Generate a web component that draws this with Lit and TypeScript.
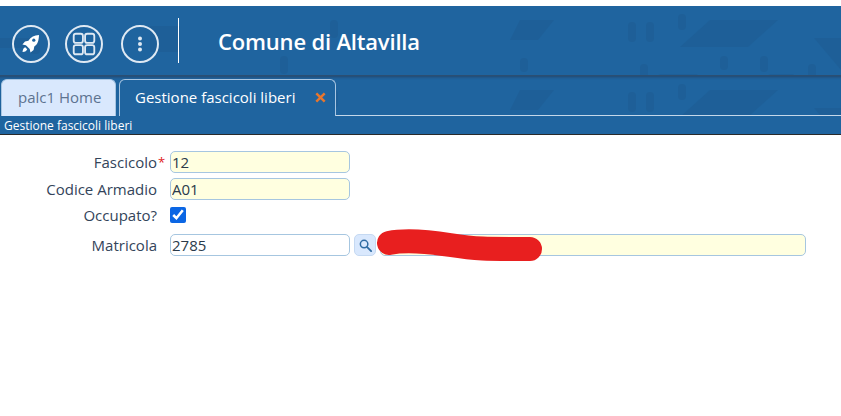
import { LitElement, css, html, svg } from "lit";
import { customElement } from "lit/decorators.js";

// faint block pattern behind the header, repeated on the tab strip
const patternShapes = svg`
    <path d="M710 14h68l-30 27h-68z" />
    <path d="M814 32h27v32z" />
    <path d="M660 68h38l-10 7h-36z" />
    <path d="M770 68h24l-6 7h-26z" />
    <path d="M0 32h36l-8 10h-28z" />
    <path d="M150 20h30v26h-30z" />
    <path d="M520 14h34l-16 20h-28z" />
    <rect x="678" y="8" width="8" height="16" rx="4" />
    <rect x="628" y="16" width="8" height="20" rx="4" />
    <rect x="646" y="16" width="8" height="20" rx="4" />
    <rect x="720" y="50" width="8" height="14" rx="4" />
    <rect x="760" y="50" width="8" height="16" rx="4" />
    <rect x="808" y="58" width="8" height="16" rx="4" />
    <rect x="640" y="58" width="8" height="16" rx="4" />
    <rect x="330" y="14" width="8" height="18" rx="4" />
    <rect x="280" y="50" width="8" height="18" rx="4" />
    <rect x="30" y="30" width="10" height="18" rx="4" />
    <rect x="520" y="52" width="8" height="14" rx="4" />
`;

@customElement("app-root")
export class AppRoot extends LitElement {
    renderHeader() {
        return html`
            <header class="header">
                <svg class="pattern" viewBox="0 0 841 110" preserveAspectRatio="none">
                    ${patternShapes}
                </svg>
                <button class="round">
                    <svg viewBox="0 0 24 24" width="24" height="24">
                        <path
                            fill="#fff"
                            d="M20 3c-4.800.2-8.200 2-10.600 5.700L6 9.400 3.400 12.500l3.500.8 3.800 3.800.8 3.500 3.100-2.600.7-3.400C19 12.200 19.800 8 20 3z"
                        />
                        <circle cx="14.800" cy="8.200" r="1.600" fill="#1f649f" />
                        <path fill="#fff" d="M6.300 15.300c-1.600.5-2.500 2-2.800 4.700 2.700-.3 4.200-1.200 4.700-2.800z" />
                    </svg>
                </button>
                <button class="round">
                    <svg viewBox="0 0 24 24" width="26" height="26" fill="none" stroke="#dfe9f3" stroke-width="1.700">
                        <rect x="2.500" y="2.500" width="8.500" height="8.500" rx="2" />
                        <rect x="13" y="2.500" width="8.500" height="8.500" rx="2" />
                        <rect x="2.500" y="13" width="8.500" height="8.500" rx="2" />
                        <rect x="13" y="13" width="8.500" height="8.500" rx="2" />
                    </svg>
                </button>
                <button class="round">
                    <svg viewBox="0 0 24 24" width="24" height="24" fill="#dfe9f3">
                        <circle cx="12" cy="6.500" r="2" />
                        <circle cx="12" cy="12" r="2" />
                        <circle cx="12" cy="17.500" r="2" />
                    </svg>
                </button>
                <div class="divider"></div>
                <h1>Comune di Altavilla</h1>
            </header>
        `;
    }

    renderTabs() {
        return html`
            <nav class="tabs">
                <svg class="pattern" viewBox="0 0 841 110" preserveAspectRatio="none">
                    ${patternShapes}
                </svg>
                <div class="tab home">palc1 Home</div>
                <div class="tab active">
                    Gestione fascicoli liberi
                    <svg class="close" viewBox="0 0 10 10" width="11" height="11">
                        <path d="M1.200 1.200l7.600 7.600M8.800 1.200L1.200 8.800" stroke="#e8762d" stroke-width="2.200" />
                    </svg>
                </div>
                <div class="tab-rest"></div>
            </nav>
            <div class="title-bar">Gestione fascicoli liberi</div>
        `;
    }

    renderForm() {
        return html`
            <form class="form">
                <label>Fascicolo<span class="req">*</span></label>
                <input class="field short" .value=${"12"} />

                <label>Codice Armadio</label>
                <input class="field short" .value=${"A01"} />

                <label class="check-row">Occupato?</label>
                <div class="check-cell check-row">
                    <input type="checkbox" .checked=${true} />
                </div>

                <label>Matricola</label>
                <div class="lookup">
                    <input class="field short white" .value=${"2785"} />
                    <button type="button" class="search">
                        <svg viewBox="0 0 16 16" width="15" height="15" fill="none">
                            <circle cx="6.500" cy="6.500" r="4" stroke="#2f6ca3" stroke-width="1.600" />
                            <path d="M9.800 9.800l4.200 4.200" stroke="#2f6ca3" stroke-width="2" stroke-linecap="round" />
                        </svg>
                    </button>
                    <input class="field long" />
                    <svg class="scribble" viewBox="0 0 171 36" width="171" height="36">
                        <path
                            d="M15 16C30 13 50 14 76 18S110 22 156 22"
                            fill="none"
                            stroke="#e81f1f"
                            stroke-width="24"
                            stroke-linecap="round"
                        />
                    </svg>
                </div>
            </form>
        `;
    }

    render() {
        return html`${this.renderHeader()}${this.renderTabs()}${this.renderForm()}`;
    }

    static styles = css`
        :host {
            display: block;
            width: 841px;
            height: 416px;
            background: #fff;
            padding-top: 6px;
            box-sizing: border-box;
            font-family: "Open Sans", sans-serif;
            color: #2b3a4a;
            overflow: hidden;
        }

        .pattern {
            position: absolute;
            left: 0;
            top: 0;
            width: 100%;
            height: 110px;
            fill: #1b4f7e;
            opacity: 0.2;
            pointer-events: none;
        }

        .header {
            position: relative;
            height: 69px;
            box-sizing: border-box;
            display: flex;
            align-items: center;
            gap: 18px;
            padding: 0 0 0 12px;
            background: #1f649f;
            overflow: hidden;
        }

        .round {
            position: relative;
            width: 38px;
            height: 38px;
            margin-top: 6px;
            padding: 0;
            display: flex;
            align-items: center;
            justify-content: center;
            border: 2px solid #dfe9f3;
            border-radius: 50%;
            background: transparent;
        }

        .round:nth-of-type(2) {
            margin-left: -3px;
        }

        .divider {
            position: relative;
            width: 1px;
            height: 45px;
            margin-left: 1px;
            background: #fff;
        }

        h1 {
            position: relative;
            margin: 0 0 0 21px;
            font-size: 22px;
            font-weight: 600;
            letter-spacing: -0.18px;
            color: #fff;
        }

        .tabs {
            position: relative;
            height: 41px;
            box-sizing: border-box;
            display: flex;
            align-items: flex-end;
            padding: 4px 0 0 1px;
            background: #1f649f;
            border-top: 1px solid #2b4f73;
            box-shadow: inset 0 3px 3px -2px #24466a;
            overflow: hidden;
        }

        .tab {
            position: relative;
            height: 37px;
            box-sizing: border-box;
            padding-bottom: 2px;
            display: flex;
            align-items: center;
            font-size: 15px;
            border-radius: 6px 6px 0 0;
        }

        .home {
            width: 115px;
            padding-left: 16px;
            background: #d9e8fd;
            color: #5d7390;
            border: 1px solid #a9c6e2;
            border-bottom: 0;
        }

        .active {
            width: 217px;
            margin-left: 3px;
            padding-left: 15px;
            color: #fff;
            background: #1f649f;
            border: 1px solid #a9c6e2;
            border-bottom: 0;
        }

        .close {
            margin-left: 20px;
        }

        .tab-rest {
            position: relative;
            flex: 1;
            border-bottom: 1px solid #c5d8ea;
        }

        .title-bar {
            height: 19px;
            box-sizing: border-box;
            padding: 1px 0 0 4px;
            font-size: 12px;
            line-height: 17px;
            color: #fff;
            background: #1f649f;
            border-bottom: 1px solid #2a2a2a;
        }

        .form {
            display: grid;
            grid-template-columns: 157px 1fr;
            column-gap: 13px;
            row-gap: 5px;
            padding-top: 16px;
            align-items: center;
        }

        label {
            text-align: right;
            font-size: 15px;
            line-height: 20px;
            color: #33445a;
        }

        .req {
            position: absolute;
            margin-left: 1px;
            font-size: 13px;
            color: #e01b1b;
        }

        .field {
            box-sizing: border-box;
            height: 22px;
            padding: 0 1px;
            font-family: inherit;
            font-size: 15px;
            color: #2b3a4a;
            background: #ffffe0;
            border: 1px solid #a6c6e0;
            border-radius: 5px;
            outline: none;
        }

        .short {
            width: 180px;
        }

        .white {
            background: #fff;
        }

        .long {
            width: 426px;
        }

        .check-row {
            margin-bottom: 4px;
        }

        .check-cell {
            height: 20px;
            display: flex;
            align-items: center;
        }

        .check-cell input {
            width: 16px;
            height: 16px;
            margin: 0;
            accent-color: #0b66e4;
        }

        .lookup {
            position: relative;
            display: flex;
            align-items: center;
            gap: 4px;
        }

        .search {
            width: 22px;
            height: 22px;
            padding: 0;
            display: flex;
            align-items: center;
            justify-content: center;
            background: #d9e8fd;
            border: 1px solid #c5d9f2;
            border-radius: 5px;
        }

        .scribble {
            position: absolute;
            left: 204px;
            top: -7px;
        }
    `;
}
